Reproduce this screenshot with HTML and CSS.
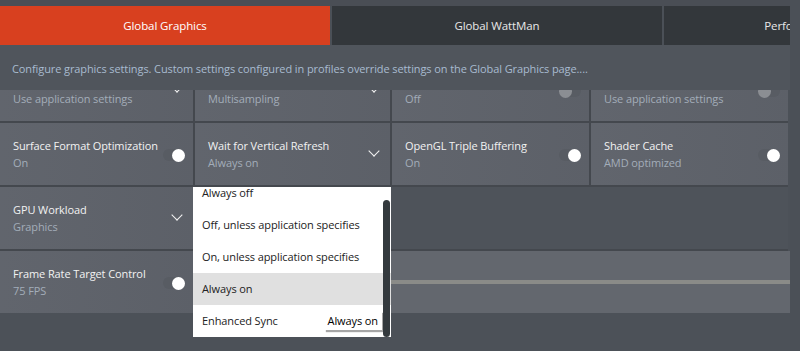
FILE: index.html
```html
<!DOCTYPE html>
<html lang="en">
<head>
    <meta charset="UTF-8">
    <meta name="viewport" content="width=device-width, initial-scale=1.0">
    <title>Global Graphics</title>
    <link rel="stylesheet" href="styles.css">
</head>
<body>
    <div class="app">
        <div class="topbar"></div>

        <nav class="tabs">
            <div class="tab active">Global Graphics</div>
            <div class="tab">Global WattMan</div>
            <div class="tab">Performance Monitoring</div>
        </nav>

        <p class="desc">Configure graphics settings. Custom settings configured in profiles override settings on the Global Graphics page....</p>

        <div class="viewport">
            <div class="grid">
                <!-- row 1 (scrolled partly out of view, titles hidden) -->
                <div class="cell scrolled">
                    <div class="value">Use application settings</div>
                    <span class="chevron"></span>
                </div>
                <div class="cell scrolled">
                    <div class="value">Multisampling</div>
                    <span class="chevron"></span>
                </div>
                <div class="cell scrolled">
                    <div class="value">Off</div>
                    <span class="toggle off"></span>
                </div>
                <div class="cell scrolled">
                    <div class="value">Use application settings</div>
                    <span class="toggle off"></span>
                </div>

                <!-- row 2 -->
                <div class="cell">
                    <div class="title">Surface Format Optimization</div>
                    <div class="value">On</div>
                    <span class="toggle"></span>
                </div>
                <div class="cell">
                    <div class="title">Wait for Vertical Refresh</div>
                    <div class="value">Always on</div>
                    <span class="chevron"></span>
                </div>
                <div class="cell">
                    <div class="title">OpenGL Triple Buffering</div>
                    <div class="value">On</div>
                    <span class="toggle"></span>
                </div>
                <div class="cell">
                    <div class="title">Shader Cache</div>
                    <div class="value">AMD optimized</div>
                    <span class="toggle"></span>
                </div>

                <!-- row 3 -->
                <div class="cell">
                    <div class="title">GPU Workload</div>
                    <div class="value">Graphics</div>
                    <span class="chevron"></span>
                </div>
                <div class="empty"></div>

                <!-- row 4 -->
                <div class="cell">
                    <div class="title">Frame Rate Target Control</div>
                    <div class="value">75 FPS</div>
                    <span class="toggle"></span>
                </div>
                <div class="slider-band">
                    <div class="slider-track"></div>
                </div>
            </div>

            <div class="dropdown">
                <ul class="options">
                    <li>Always off</li>
                    <li>Off, unless application specifies</li>
                    <li>On, unless application specifies</li>
                    <li class="selected">Always on</li>
                    <li>Enhanced Sync <span class="tooltip">Always on</span></li>
                </ul>
                <div class="scrollbar"></div>
            </div>
        </div>
    </div>
</body>
</html>
```

FILE: styles.css
```css
:root {
    --accent: #d8401f;
    --tab-dark: #33373b;
    --cell: #5e626a;
    --page: #4e535a;
    --title: #f2f2f2;
    --value: #a3adb9;
}

* {
    box-sizing: border-box;
}

body {
    margin: 0;
    background-color: #4b5057;
    font-family: 'Open Sans', 'Noto Sans', sans-serif;
    font-size: 11px;
    letter-spacing: -0.1px;
    color: var(--title);
    height: 351px;
    overflow: hidden;
}

.app {
    width: 790px;
    overflow: hidden;
}

.topbar {
    height: 6px;
    background-color: #4a4e55;
}

.tabs {
    display: flex;
    gap: 2px;
    height: 39px;
    width: 996px;
}

.tab {
    flex: 0 0 330px;
    display: flex;
    align-items: center;
    justify-content: center;
    background-color: var(--tab-dark);
    color: #e8e8e8;
    font-size: 11.5px;
    white-space: nowrap;
}

.tab.active {
    background-color: var(--accent);
    color: #fff;
}

.desc {
    margin: 0;
    height: 45px;
    padding-left: 12px;
    line-height: 48px;
    background-color: #50555c;
    color: #a8bbd0;
    white-space: nowrap;
}

.viewport {
    position: relative;
    height: 261px;
    overflow: hidden;
    background-color: #4c5158;
}

.grid {
    display: grid;
    grid-template-columns: 193px 195px 197px 197px;
    grid-auto-rows: 62px;
    gap: 2px;
    width: 788px;
    margin-top: -31px;
    background-color: #44484e;
}

.cell {
    position: relative;
    background-color: var(--cell);
    background-image: linear-gradient(to right, rgba(255,255,255,0.02), rgba(0,0,0,0.02));
    padding: 15px 0 0 13px;
}

.cell.scrolled {
    padding-top: 31px;
}

.title {
    line-height: 16px;
    color: var(--title);
}

.value {
    line-height: 18px;
    color: var(--value);
}

.empty {
    grid-column: span 3;
    background-color: var(--page);
}

.slider-band {
    grid-column: span 3;
    display: flex;
    align-items: center;
    margin-right: -2px;
    background-color: #63676e;
}

.slider-track {
    width: 100%;
    height: 4px;
    background-color: #8a8b88;
}

.chevron {
    position: absolute;
    right: 12px;
    top: 24px;
    width: 8px;
    height: 8px;
    border-right: 1.5px solid #f4f4f4;
    border-bottom: 1.5px solid #f4f4f4;
    transform: rotate(45deg);
}

.toggle {
    position: absolute;
    right: 8px;
    top: 26px;
    width: 22px;
    height: 12px;
    border-radius: 6px;
    background-color: #585c63;
}

.toggle::after {
    content: '';
    position: absolute;
    right: 0;
    top: -0.5px;
    width: 13px;
    height: 13px;
    border-radius: 50%;
    background-color: #fff;
}

.toggle.off::after {
    right: auto;
    left: 0;
    background-color: #8b8e93;
}

.dropdown {
    position: absolute;
    left: 193px;
    top: 97px;
    width: 198px;
    height: 150px;
    overflow: hidden;
    background-color: #fff;
}

.options {
    list-style: none;
    margin: -10px 0 0;
    padding: 0;
}

.options li {
    position: relative;
    height: 32px;
    line-height: 32px;
    padding-left: 9px;
    color: #222;
    white-space: nowrap;
}

.options li.selected {
    background-color: #e0e0e0;
}

.tooltip {
    position: absolute;
    right: 9px;
    top: 6px;
    height: 19px;
    line-height: 19px;
    padding: 0 4px;
    background-color: #fff;
    color: #000;
    box-shadow: 2px 2px 1px rgba(0,0,0,0.35);
}

.scrollbar {
    position: absolute;
    right: 1px;
    top: 13px;
    bottom: 0;
    width: 7px;
    border-radius: 4px;
    background-color: #343a3e;
}
```
